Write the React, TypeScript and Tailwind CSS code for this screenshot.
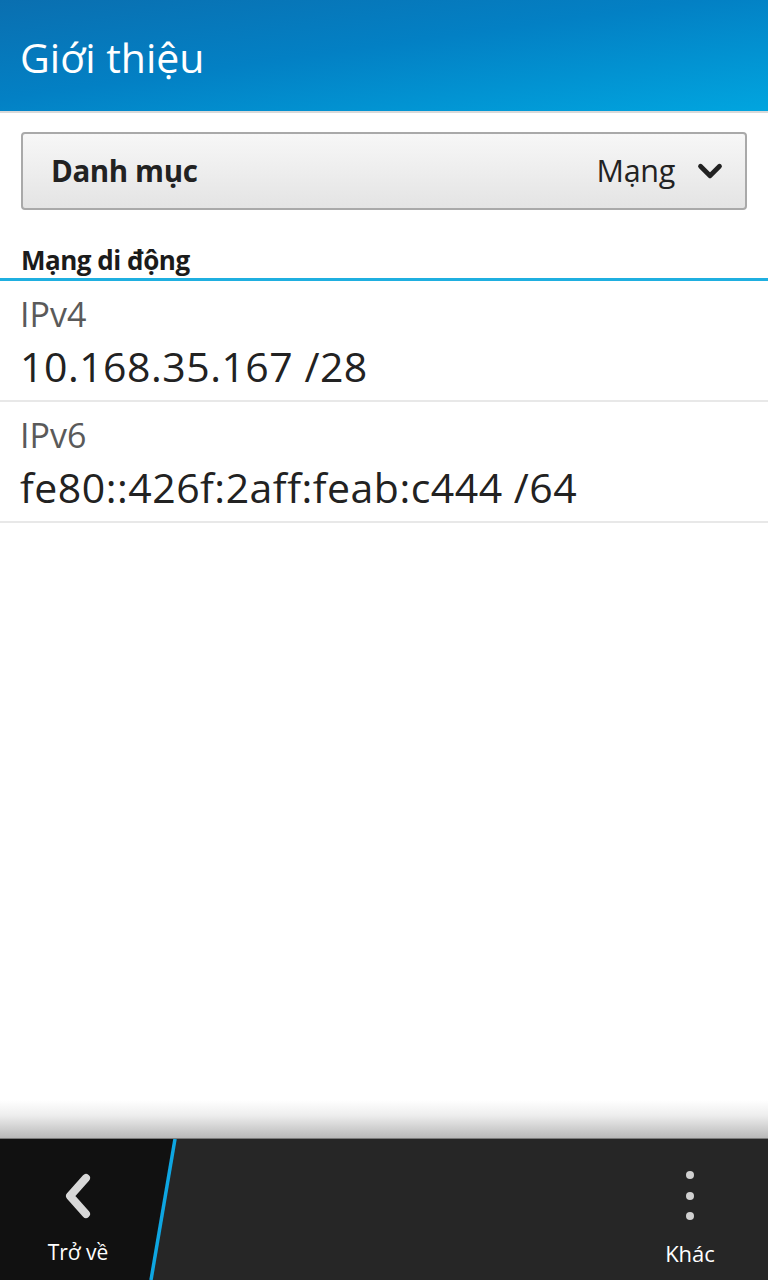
import { ChevronDown } from "lucide-react";

const rows = [
  { label: "IPv4", value: "10.168.35.167 /28" },
  { label: "IPv6", value: "fe80::426f:2aff:feab:c444 /64" },
];

export default function App() {
  return (
    <div className="flex h-[1280px] w-[768px] flex-col overflow-hidden bg-white font-['Open_Sans','Noto_Sans',sans-serif]">
      {/* Title bar */}
      <div className="flex h-[111px] items-center bg-[linear-gradient(172deg,#0a6fb0_0%,#0380c4_45%,#01a5df_100%)] pl-[20px] pt-[4px] text-[41px] text-white">
        Giới thiệu
      </div>
      <div className="h-[2px] bg-[#d9d9d9]" />

      <div className="flex flex-1 flex-col">
        {/* Category dropdown */}
        <div className="px-[21px] pt-[19px]">
          <div className="flex h-[78px] items-center rounded-[4px] border-2 border-[#a9a9a9] bg-[linear-gradient(180deg,#f7f7f7,#e4e4e4)] pl-[28px] pr-[16px] text-[#222]">
            <span className="text-[29.5px] font-bold tracking-[-0.4px]">Danh mục</span>
            <span className="ml-auto text-[30.5px] tracking-[-0.3px]">Mạng</span>
            <ChevronDown className="ml-[16px] h-[38px] w-[38px]" strokeWidth={3} />
          </div>
        </div>

        {/* Section header */}
        <div className="mt-[32px] px-[21px] text-[26px] font-bold leading-[36px] tracking-[-0.5px] text-[#1b1b1b]">
          Mạng di động
        </div>
        <div className="h-[3px] bg-[#1fafe0]" />

        {rows.map((r) => (
          <div key={r.label} className="flex h-[121px] flex-col border-b-2 border-[#e8e8e8] px-[20px] pt-[10px]">
            <span className="text-[34px] leading-[47px] text-[#5a5a5a]">{r.label}</span>
            <span className="text-[41px] leading-[56px] tracking-[0.5px] text-[#222]">{r.value}</span>
          </div>
        ))}
      </div>

      {/* Bottom action bar */}
      <div className="h-[38px] bg-[linear-gradient(180deg,#ffffff_0%,#eeeeee_40%,#b9b9b9_100%)]" />
      <div className="h-[1px] bg-[#7a7a7a]" />
      <div className="relative flex h-[141px] bg-[#262626]">
        <div className="flex w-[176px] flex-col items-center bg-[#111] pr-[20px] [clip-path:polygon(0_0,176px_0,151px_100%,0_100%)]">
          <svg width="40" height="48" viewBox="0 0 40 48" className="mt-[33px]">
            <path d="M28 6 L12 24 L28 42" fill="none" stroke="#d8d8d8" strokeWidth="8" strokeLinecap="round" strokeLinejoin="round" />
          </svg>
          <span className="mt-[17px] text-[21px] text-white">Trở về</span>
        </div>
        <svg className="absolute left-0 top-0" width="200" height="141">
          <line x1="175" y1="0" x2="151" y2="141" stroke="#0ea6e2" strokeWidth="3.5" />
        </svg>
        <div className="ml-auto flex w-[120px] flex-col items-center pr-[36px]">
          <div className="mt-[32px] flex flex-col gap-[12.5px]">
            <div className="h-[8px] w-[8px] rounded-full bg-[#d0d0d0]" />
            <div className="h-[8px] w-[8px] rounded-full bg-[#d0d0d0]" />
            <div className="h-[8px] w-[8px] rounded-full bg-[#d0d0d0]" />
          </div>
          <span className="mt-[17px] text-[22px] text-white">Khác</span>
        </div>
      </div>
    </div>
  );
}
